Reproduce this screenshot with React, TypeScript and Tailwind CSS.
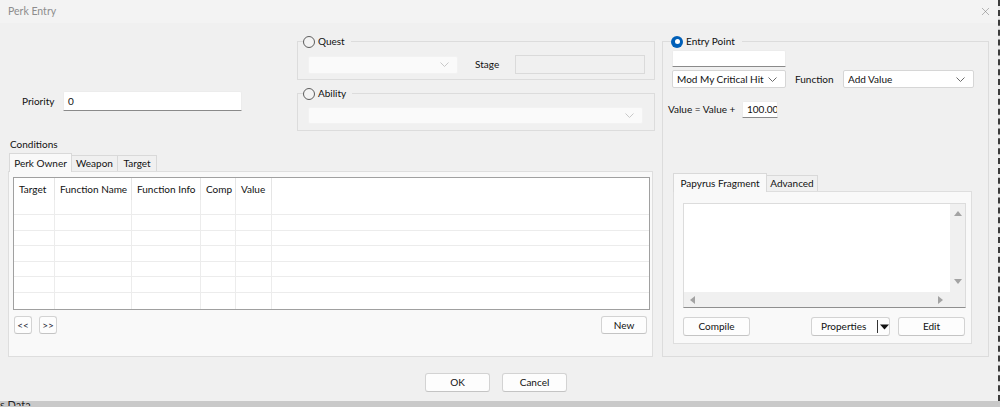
import { X } from "lucide-react";

function Radio({ checked }: { checked?: boolean }) {
  if (checked) {
    return (
      <span className="w-[12px] h-[12px] rounded-full bg-[#005fb8] flex items-center justify-center shrink-0">
        <span className="w-[5px] h-[5px] rounded-full bg-white" />
      </span>
    );
  }
  return <span className="w-[12px] h-[12px] rounded-full border border-[#5d5d5d] bg-[#f3f3f3] shrink-0" />;
}

function Chevron({ light }: { light?: boolean }) {
  return (
    <svg width="9" height="5" viewBox="0 0 9 5" className="shrink-0">
      <path d="M0.5 0.5 L4.5 4.5 L8.5 0.5" fill="none" stroke={light ? "#c8c8c8" : "#6a6a6a"} strokeWidth="1" />
    </svg>
  );
}

function Combo({ className, text, disabled }: { className: string; text?: string; disabled?: boolean }) {
  return (
    <div
      className={
        "flex items-center gap-[3px] pl-[4px] pr-[8px] rounded-[2px] " +
        (disabled ? "bg-[#fafafa] border border-[#f2f2f2] " : "bg-white border border-[#d6d6d6] ") +
        className
      }
    >
      <span className="flex-1 min-w-0 whitespace-nowrap overflow-hidden">{text}</span>
      <Chevron light={disabled} />
    </div>
  );
}

function TextBox({ className, text }: { className: string; text?: string }) {
  return (
    <div
      className={
        "flex items-center pl-[4px] bg-white border border-[#ececec] border-b-[#8a8a8a] rounded-t-[2px] overflow-hidden whitespace-nowrap " +
        className
      }
    >
      {text}
    </div>
  );
}

function Btn({ className, children }: { className: string; children: React.ReactNode }) {
  return (
    <div
      className={
        "flex items-center justify-center bg-[#fdfdfd] border border-[#d3d3d3] border-b-[#c4c4c4] rounded-[3px] whitespace-nowrap " +
        className
      }
    >
      {children}
    </div>
  );
}

const cols = ["w-[41px]", "w-[77px]", "w-[69px]", "w-[35px]", "w-[36px]"];
const heads = ["Target", "Function Name", "Function Info", "Comp", "Value"];
const rowHeights = ["h-[15px]", "h-[16px]", "h-[15px]", "h-[16px]", "h-[15px]", "h-[16px]", "h-[16px]"];

function ListView() {
  return (
    <div className="w-[637px] h-[133px] border border-[#a0a0a0] bg-white flex flex-col overflow-hidden">
      <div className="flex h-[22px] shrink-0">
        {heads.map((h, i) => (
          <div key={h} className={"flex items-center pl-[5px] border-r border-[#e5e5e5] whitespace-nowrap " + cols[i]}>
            {h}
          </div>
        ))}
        <div className="flex-1" />
      </div>
      {rowHeights.map((rh, r) => (
        <div key={r} className={"flex shrink-0 " + rh + (r < 6 ? " border-b border-[#ececec]" : "")}>
          {cols.map((c, i) => (
            <div key={i} className={"border-r border-[#ececec] " + c} />
          ))}
          <div className="flex-1" />
        </div>
      ))}
    </div>
  );
}

function Triangle({ dir }: { dir: "up" | "down" | "left" | "right" }) {
  const d = {
    up: "M0 6 L4 1 L8 6 Z",
    down: "M0 1 L4 6 L8 1 Z",
    left: "M6 0 L1 4 L6 8 Z",
    right: "M1 0 L6 4 L1 8 Z",
  }[dir];
  return (
    <svg width="8" height="8" viewBox="0 0 8 8">
      <path d={d} fill="#a3a3a3" />
    </svg>
  );
}

export default function App() {
  return (
    <div className="w-[1000px] h-[407px] overflow-hidden bg-[#c9c9c9] flex flex-col font-['Lato',sans-serif] text-[10px] text-[#111]">
      <div className="flex h-[401px] shrink-0">
        <div className="w-[998px] flex flex-col bg-[#f0f0f0]">
          {/* title bar */}
          <div className="h-[23px] shrink-0 bg-[#f3f3f3] flex items-center justify-between pl-[8px] pr-[6px]">
            <span className="text-[#8d8d8d] text-[10.5px]">Perk Entry</span>
            <X size={13} strokeWidth={1} color="#7a7a7a" />
          </div>

          <div className="flex pl-[8px] pt-[12px]">
            {/* left side */}
            <div className="w-[647px] flex flex-col">
              <div className="flex">
                <div className="w-[289px] pt-[56px] pl-[14px]">
                  <div className="flex items-center">
                    <span className="w-[41px]">Priority</span>
                    <TextBox className="w-[179px] h-[20px]" text="0" />
                  </div>
                </div>
                <div className="w-[358px] flex flex-col gap-[7px]">
                  <fieldset className="border border-[#dcdcdc] h-[45px]">
                    <legend className="ml-[5px] pr-[6px] h-[13px] flex items-center gap-[3px]">
                      <Radio />
                      <span>Quest</span>
                    </legend>
                    <div className="flex items-center pl-[10px] pt-[7px]">
                      <Combo className="w-[150px] h-[18px]" disabled />
                      <span className="ml-[17px] w-[40px]">Stage</span>
                      <div className="w-[130px] h-[19px] border border-[#dadada] bg-[#f0f0f0]" />
                    </div>
                  </fieldset>
                  <fieldset className="border border-[#dcdcdc] h-[44px]">
                    <legend className="ml-[5px] pr-[6px] h-[13px] flex items-center gap-[3px]">
                      <Radio />
                      <span>Ability</span>
                    </legend>
                    <div className="pl-[10px] pt-[7px]">
                      <Combo className="w-[335px] h-[17px]" disabled />
                    </div>
                  </fieldset>
                </div>
              </div>

              {/* conditions */}
              <div className="mt-[6px] h-[14px] pl-[2px] flex items-center">Conditions</div>
              <div className="mt-[1px] flex items-end pl-[1px] h-[19px]">
                <div className="h-[19px] -mb-px relative z-10 bg-[#f9f9f9] border border-b-0 border-[#d9d9d9] w-[63px] flex items-center justify-center whitespace-nowrap">
                  Perk Owner
                </div>
                <div className="h-[16px] bg-[#f0f0f0] border border-b-0 border-l-0 border-[#d9d9d9] w-[46px] flex items-center justify-center">
                  Weapon
                </div>
                <div className="h-[16px] bg-[#f0f0f0] border border-b-0 border-l-0 border-[#d9d9d9] w-[39px] flex items-center justify-center">
                  Target
                </div>
              </div>
              <div className="w-[645px] h-[186px] border border-[#dedede] bg-[#f9f9f9] pl-[4px] pt-[5px]">
                <ListView />
                <div className="w-[637px] mt-[6px] flex items-center justify-between">
                  <div className="flex gap-[7px] ml-[1px]">
                    <Btn className="w-[18px] h-[18px] text-[#223]">&lt;&lt;</Btn>
                    <Btn className="w-[18px] h-[18px] text-[#223]">&gt;&gt;</Btn>
                  </div>
                  <Btn className="w-[46px] h-[18px] mr-[3px]">New</Btn>
                </div>
              </div>
            </div>

            {/* entry point */}
            <fieldset className="ml-[7px] w-[327px] h-[322px] border border-[#dcdcdc]">
              <legend className="ml-[8px] pr-[7px] h-[13px] flex items-center gap-[3px]">
                <Radio checked />
                <span>Entry Point</span>
              </legend>
              <div className="flex flex-col">
                <TextBox className="ml-[9px] mt-[2px] w-[114px] h-[17px]" />
                <div className="flex items-center ml-[9px] mt-[3px]">
                  <Combo className="w-[114px] h-[18px]" text="Mod My Critical Hit Ch" />
                  <span className="ml-[9px] w-[48px]">Function</span>
                  <Combo className="w-[131px] h-[18px]" text="Add Value" />
                </div>
                <div className="flex items-center ml-[5px] mt-[13px]">
                  <span className="w-[74px] whitespace-nowrap">Value = Value +</span>
                  <TextBox className="w-[36px] h-[17px]" text="100.00" />
                </div>

                {/* papyrus tabs */}
                <div className="mt-[54px] ml-[10px] flex items-end h-[19px]">
                  <div className="h-[19px] -mb-px relative z-10 bg-[#f9f9f9] border border-b-0 border-[#d9d9d9] w-[94px] flex items-center justify-center whitespace-nowrap">
                    Papyrus Fragment
                  </div>
                  <div className="h-[16px] bg-[#f0f0f0] border border-b-0 border-l-0 border-[#d9d9d9] w-[51px] flex items-center justify-center">
                    Advanced
                  </div>
                </div>
                <div className="ml-[10px] w-[299px] h-[153px] border border-[#dedede] bg-[#f9f9f9] pl-[9px] pt-[11px]">
                  <div className="w-[283px] h-[105px] border border-[#dcdcdc] border-b-[#8f8f8f] flex flex-col">
                    <div className="flex flex-1">
                      <div className="flex-1 bg-white" />
                      <div className="w-[15px] bg-[#f0f0f0] flex flex-col items-center justify-between py-[6px]">
                        <Triangle dir="up" />
                        <Triangle dir="down" />
                      </div>
                    </div>
                    <div className="h-[15px] bg-[#f0f0f0] flex items-center justify-between pl-[5px] pr-[20px]">
                      <Triangle dir="left" />
                      <Triangle dir="right" />
                    </div>
                  </div>
                  <div className="mt-[9px] w-[283px] flex items-center">
                    <Btn className="w-[67px] h-[19px]">Compile</Btn>
                    <Btn className="ml-[61px] w-[79px] h-[19px] justify-start pl-[9px]">
                      <span className="w-[56px]">Properties</span>
                      <span className="w-[1px] h-[13px] bg-[#333]" />
                      <svg width="9" height="6" viewBox="0 0 9 6" className="ml-[2px]">
                        <path d="M0 0.5 L9 0.5 L4.5 5.5 Z" fill="#111" />
                      </svg>
                    </Btn>
                    <Btn className="ml-[8px] w-[67px] h-[19px]">Edit</Btn>
                  </div>
                </div>
              </div>
            </fieldset>
          </div>

          {/* ok cancel */}
          <div className="mt-[16px] flex justify-center gap-[12px] pr-[6px]">
            <Btn className="w-[65px] h-[19px]">OK</Btn>
            <Btn className="w-[65px] h-[19px]">Cancel</Btn>
          </div>
        </div>
        <div className="w-[2px] border-l-2 border-dashed border-[#3c3c3c] bg-[#e8e8e8]" />
      </div>
      <div className="h-[6px] overflow-hidden leading-[10px] text-[11px] -mt-[1px] text-[#222]">s Data</div>
    </div>
  );
}
